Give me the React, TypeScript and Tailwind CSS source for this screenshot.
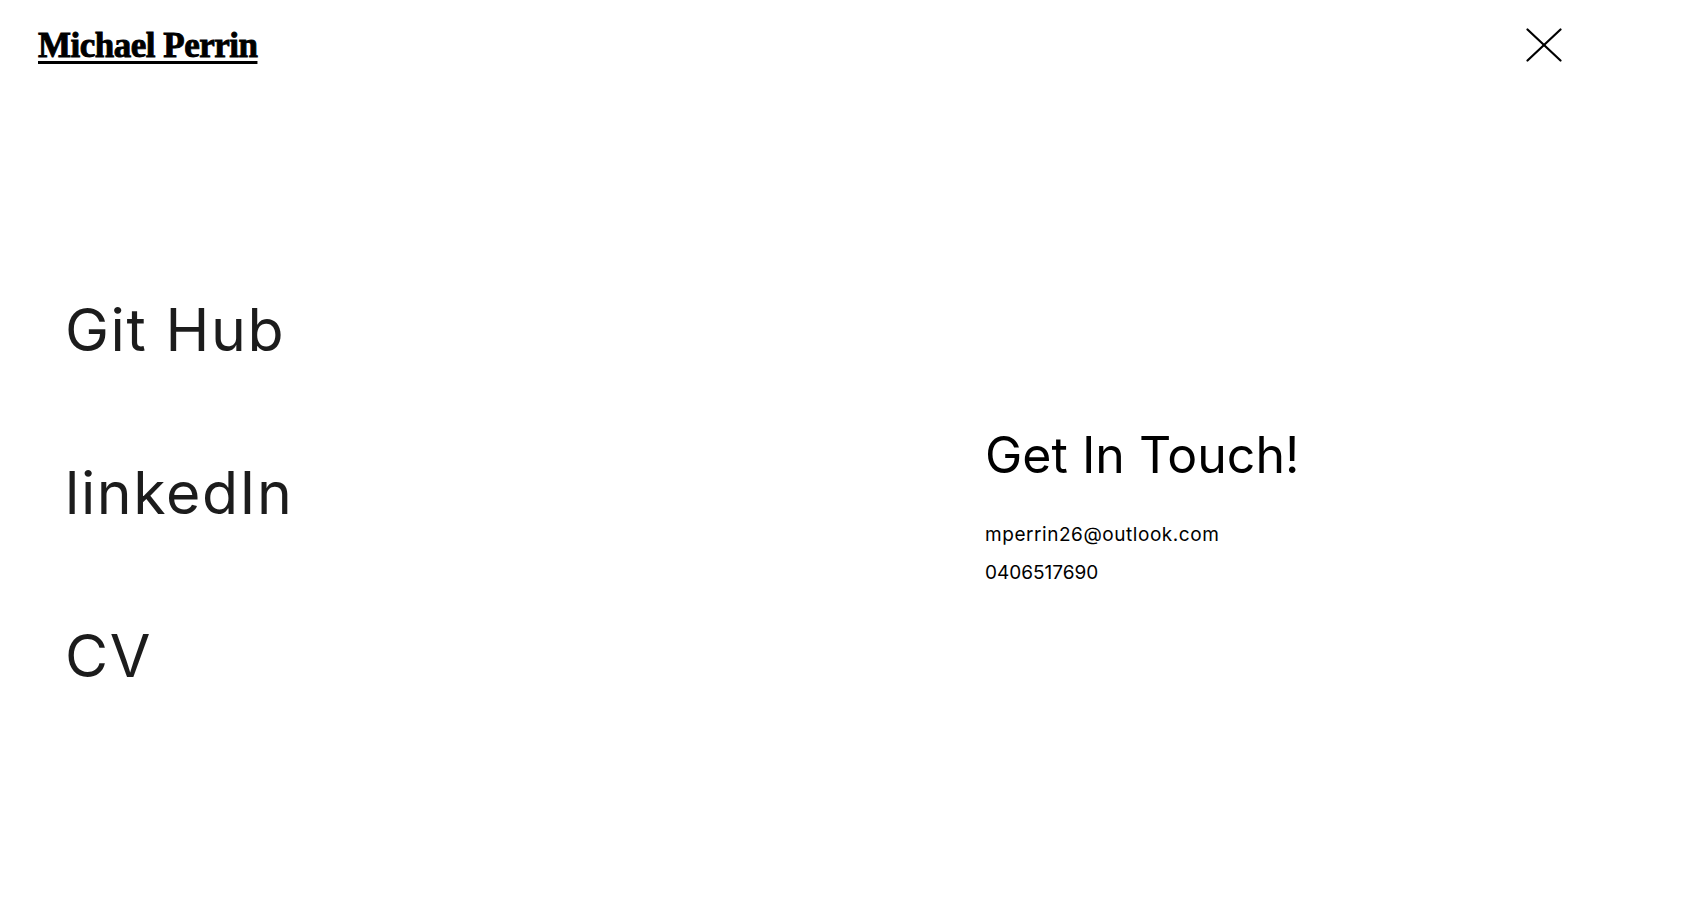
import React from 'react';

const links = ['Git Hub', 'linkedIn', 'CV'];

const App: React.FC = () => {
  return (
    <div className="min-h-screen w-full bg-white text-black">
      <header className="h-[90px] flex items-center justify-between pl-[38px] pr-[127px]">
        <a
          href="#"
          className="font-['Liberation_Serif',serif] font-bold text-[35px] leading-none tracking-[-0.5px] [-webkit-text-stroke:0.9px_black] underline decoration-[3px] underline-offset-[4px]"
        >
          Michael Perrin
        </a>
        <button aria-label="Close" className="w-[36px] h-[36px] flex items-center justify-center">
          <svg width="36" height="34" viewBox="0 0 36 34" fill="none" stroke="black" strokeWidth="2.2" strokeLinecap="round">
            <line x1="1.5" y1="1.5" x2="34.5" y2="32.5" />
            <line x1="34.5" y1="1.5" x2="1.5" y2="32.5" />
          </svg>
        </button>
      </header>

      <main className="flex font-['Inter',sans-serif]">
        <nav className="w-[985px] pl-[65px] pt-[210px] flex flex-col gap-[104px]">
          {links.map(label => (
            <a key={label} href="#" className="text-[59px] leading-none tracking-[1.6px] text-[#1c1c1c]">
              {label}
            </a>
          ))}
        </nav>
        <section className="pt-[340px] flex flex-col">
          <h2 className="text-[50px] leading-none text-black mb-[36px]">Get In Touch!</h2>
          <p className="text-[19px] leading-[38px] tracking-[0.55px]">mperrin26@outlook.com</p>
          <p className="text-[19px] leading-[38px]">0406517690</p>
        </section>
      </main>
    </div>
  );
};

export default App;
